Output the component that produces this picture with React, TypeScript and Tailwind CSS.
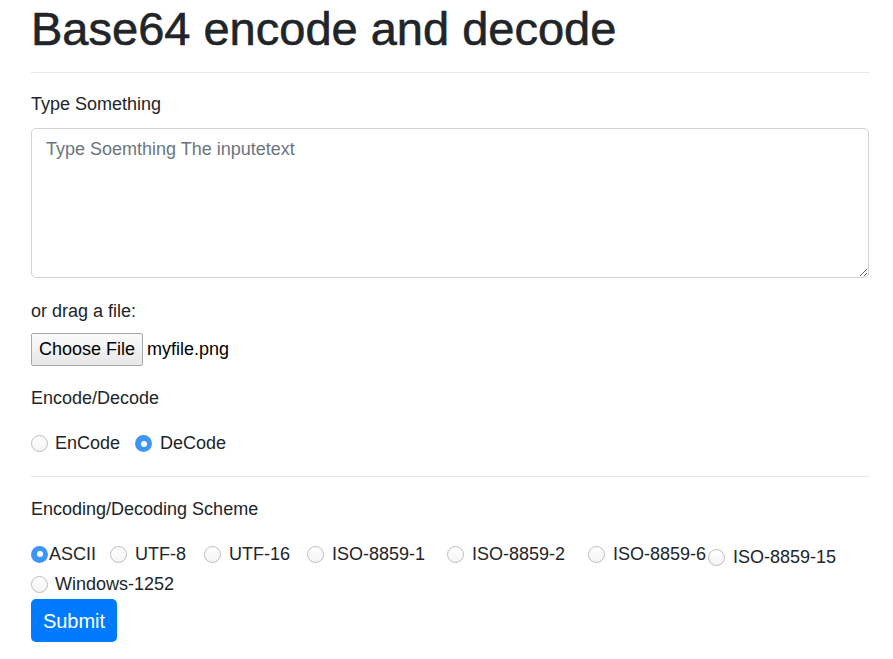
import React from "react";

function Radio({ checked }: { checked?: boolean }) {
  if (checked) {
    return (
      <span className="w-[17px] h-[17px] rounded-full bg-[#3d95f7] flex items-center justify-center shrink-0 relative z-10">
        <span className="w-[6px] h-[6px] rounded-full bg-white" />
      </span>
    );
  }
  return (
    <span className="w-[17px] h-[17px] rounded-full border border-[#bdbdbd] bg-linear-to-b from-white to-[#f4f4f4] shrink-0 relative z-10" />
  );
}

function Opt({
  label,
  checked,
  w,
  gap = "ml-[8px]",
  extra = "",
}: {
  label: string;
  checked?: boolean;
  w: string;
  gap?: string;
  extra?: string;
}) {
  return (
    <div className={`flex items-center h-[30px] shrink-0 ${w} ${extra}`}>
      <Radio checked={checked} />
      <span className={`${gap} text-[18px] leading-[27px] whitespace-nowrap`}>{label}</span>
    </div>
  );
}

export default function App() {
  return (
    <div className="font-['Liberation_Sans',Arial,sans-serif] text-[#212529] bg-white min-h-[659px]">
      <div className="ml-[31px] w-[838px] flex flex-col items-start">
        <h1 className="text-[47px] leading-[57px] font-normal m-0 [-webkit-text-stroke:0.6px_#212529]">Base64 encode and decode</h1>
        <hr className="mt-[15px] w-full border-0 border-t border-[#e8e8e8]" />
        <label className="mt-[18px] text-[18px] leading-[27px]">Type Something</label>
        <textarea
          className="mt-[10px] h-[150px] w-full border border-[#ced4da] rounded-[5px] pt-[7px] px-[14px] text-[18px] leading-[27px] text-[#495057] placeholder:text-[#6c757d] outline-none resize-y"
          placeholder="Type Soemthing The inputetext"
        />
        <label className="mt-[20px] text-[18px] leading-[27px]">or drag a file:</label>
        <div className="mt-[8px] flex items-center">
          <button className="h-[33px] w-[112px] border border-[#a9a9a9] bg-linear-to-b from-[#fbfbfb] to-[#e7e7e7] rounded-[2px] text-[18px] text-black flex items-center justify-center">
            Choose File
          </button>
          <span className="ml-[4px] text-[18px] leading-[27px] text-black">myfile.png</span>
        </div>
        <label className="mt-[19px] text-[18px] leading-[27px]">Encode/Decode</label>
        <div className="mt-[18px] flex h-[27px] items-center">
          <Opt label="EnCode" w="w-[104px]" gap="ml-[7px]" />
          <Opt label="DeCode" checked w="w-auto" />
        </div>
        <hr className="mt-[19px] w-full border-0 border-t border-[#e8e8e8]" />
        <label className="mt-[19px] text-[18px] leading-[27px]">Encoding/Decoding Scheme</label>
        <div className="mt-[16px] w-full flex flex-wrap items-start">
          <Opt label="ASCII" checked w="w-[79px]" gap="ml-[1px]" />
          <Opt label="UTF-8" w="w-[94px]" />
          <Opt label="UTF-16" w="w-[103px]" />
          <Opt label="ISO-8859-1" w="w-[140px]" />
          <Opt label="ISO-8859-2" w="w-[141px]" />
          <Opt label="ISO-8859-6" w="w-[120px]" />
          <Opt label="ISO-8859-15" w="w-[140px]" extra="pt-[6px]" />
          <Opt label="Windows-1252" w="w-[160px]" gap="ml-[7px]" />
        </div>
        <button className="h-[43px] w-[86px] rounded-[5px] bg-[#007bff] text-white text-[20px] flex items-center justify-center">
          Submit
        </button>
      </div>
    </div>
  );
}
